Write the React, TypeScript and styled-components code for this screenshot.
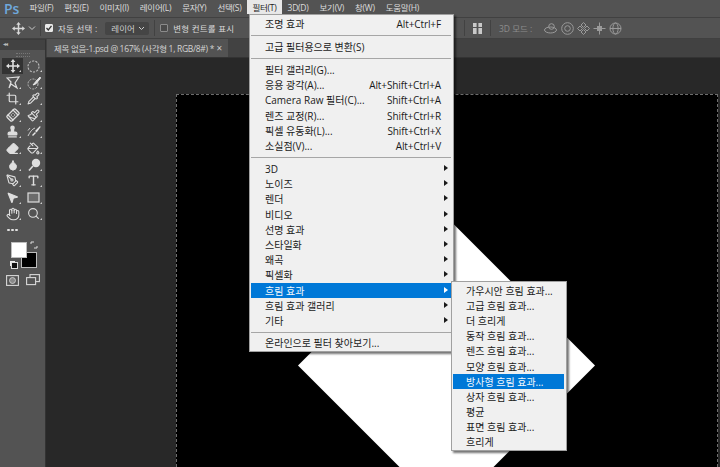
import styled, { createGlobalStyle } from "styled-components";
import {
  Bandage, Crop, Droplet, Eraser, Hand, MousePointer2, PaintBucket, Paintbrush,
  PenTool, Pipette, Search, Stamp, Type,
} from "lucide-react";
import type { ReactNode } from "react";

const Global = createGlobalStyle`
  html, body { margin: 0; padding: 0; background: #282828; }
  body { width: 720px; height: 467px; overflow: hidden; font-family: "Open Sans", "Noto Sans CJK KR", sans-serif; }
  * { box-sizing: border-box; }
`;

const Page = styled.div`
  position: relative;
  width: 720px;
  height: 467px;
  display: flex;
  flex-direction: column;
  overflow: hidden;
`;

const MenuBar = styled.div`
  height: 17px;
  background: #535353;
  display: flex;
  align-items: flex-start;
  padding-left: 4px;
`;

const Logo = styled.span`
  width: 20px;
  font-size: 14px;
  line-height: 17px;
  font-weight: 600;
  color: #6fa8dc;
  font-family: "Open Sans", sans-serif;
`;

const MenuTitles = styled.div`
  display: flex;
`;

const MenuTitle = styled.span<{ $open?: boolean }>`
  height: 14px;
  padding: 0 5.5px;
  font-size: 8.5px;
  line-height: 15px;
  letter-spacing: -0.25px;
  white-space: nowrap;
  color: ${(p) => (p.$open ? "#1c1c1c" : "#dcdcdc")};
  background: ${(p) => (p.$open ? "#e8e8e8" : "transparent")};
`;

const OptionsBar = styled.div`
  height: 22px;
  background: #535353;
  border-top: 1px solid #414141;
  border-bottom: 1px solid #404040;
  display: flex;
  align-items: center;
  padding-left: 12px;
  color: #d8d8d8;
  font-size: 8.5px;
`;

const OptionsLeft = styled.div`
  width: 452px;
  display: flex;
  align-items: center;
`;

const OptDivider = styled.span<{ $gap?: number }>`
  width: 1px;
  height: 16px;
  background: #424242;
  margin: 0 ${(p) => p.$gap ?? 5}px;
  flex: none;
`;

const ChevronGap = styled.span`
  display: flex;
  margin-left: 3px;
`;

const CheckBox = styled.span<{ $on?: boolean }>`
  width: 8px;
  height: 8px;
  flex: none;
  border: 1px solid ${(p) => (p.$on ? "#e8e8e8" : "#8b8b8b")};
  background: ${(p) => (p.$on ? "#e8e8e8" : "#4a4a4a")};
  border-radius: 1px;
  display: flex;
  align-items: center;
  justify-content: center;
`;

const OptLabel = styled.span`
  white-space: nowrap;
  margin-left: 5px;
  letter-spacing: 0.2px;
`;

const Select = styled.span`
  width: 44px;
  height: 13px;
  margin-left: 8px;
  padding: 0 4px 0 6px;
  background: #454545;
  border-radius: 2px;
  display: flex;
  align-items: center;
  justify-content: space-between;
  color: #cfcfcf;
`;

const AlignSlot = styled.span`
  display: flex;
  margin-left: 8px;
`;

const Mode3D = styled.div`
  display: flex;
  align-items: center;
  margin-left: 1px;
  color: #8d8d8d;
  font-size: 8.5px;
  white-space: nowrap;
`;

const ModeIcons = styled.div`
  display: flex;
  gap: 3.2px;
  margin-left: 12px;
`;

const Body = styled.div`
  flex: 1;
  display: flex;
  min-height: 0;
`;

const ToolPanel = styled.div`
  width: 46px;
  flex: none;
  background: #535353;
  border-right: 1px solid #333;
  border-top: 1px solid #3c3c3c;
  display: flex;
  flex-direction: column;
`;

const PanelGrip = styled.div`
  height: 10px;
  background: #424242;
  color: #bbb;
  font-size: 6px;
  line-height: 9px;
  padding-left: 3px;
  letter-spacing: -1px;
`;

const PanelHandle = styled.div`
  height: 8px;
  display: flex;
  justify-content: center;
  padding-top: 3px;
  &::before {
    content: "";
    width: 14px;
    height: 2px;
    border-top: 1px dotted #777;
    border-bottom: 1px dotted #777;
  }
`;

const ToolGrid = styled.div`
  display: grid;
  grid-template-columns: 21px 21px;
  grid-auto-rows: 16.4px;
  padding-left: 2px;
`;

const ToolSlot = styled.div<{ $active?: boolean }>`
  position: relative;
  display: flex;
  align-items: center;
  justify-content: center;
  color: #dedede;
  background: ${(p) => (p.$active ? "#333" : "transparent")};
  &::after {
    content: "";
    position: absolute;
    right: 2px;
    bottom: 2px;
    border-left: 2px solid transparent;
    border-bottom: 2px solid #d0d0d0;
  }
`;

const Tilt = styled.span`
  display: flex;
  transform: rotate(-45deg);
`;

const Dots = styled.div`
  grid-column: 1 / 3;
  display: flex;
  align-items: center;
  gap: 1.5px;
  padding-left: 5px;
  & > i {
    width: 2.5px;
    height: 2.5px;
    border-radius: 50%;
    background: #e0e0e0;
  }
`;

const Swatches = styled.div`
  position: relative;
  height: 30px;
  margin: 4px 0 0 11px;
`;

const Swatch = styled.span<{ $fill: string; $x: number; $y: number; $z: number }>`
  position: absolute;
  left: ${(p) => p.$x}px;
  top: ${(p) => p.$y}px;
  z-index: ${(p) => p.$z};
  width: 16px;
  height: 16px;
  background: ${(p) => p.$fill};
  border: 1px solid #bdbdbd;
`;

const SwapMark = styled.span`
  position: absolute;
  left: 19px;
  top: -1px;
  width: 8px;
  height: 8px;
  color: #ddd;
  display: flex;
`;

const MiniSwatch = styled.span`
  position: absolute;
  left: 0;
  top: 20px;
  width: 7px;
  height: 7px;
  background: #111;
  border: 1px solid #ddd;
  box-shadow: -2px -2px 0 -1px #eee;
`;

const BottomTools = styled.div`
  display: flex;
  gap: 7px;
  align-items: center;
  margin: 2px 0 0 6px;
  color: #d8d8d8;
`;

const Workspace = styled.div`
  flex: 1;
  min-width: 0;
  display: flex;
  flex-direction: column;
`;

const TabBar = styled.div`
  height: 19px;
  background: #424242;
  border-bottom: 1px solid #333;
  padding-left: 1px;
  display: flex;
`;

const Tab = styled.div`
  width: 181px;
  height: 18px;
  background: #535353;
  padding: 0 6px 0 7px;
  display: flex;
  align-items: center;
  justify-content: space-between;
  font-size: 8.5px;
  letter-spacing: -0.3px;
  color: #d4d4d4;
  white-space: nowrap;
`;

const Close = styled.span`
  font-size: 10px;
  color: #cfcfcf;
`;

const Canvas = styled.div`
  flex: 1;
  min-height: 0;
  background: #282828;
  padding: 36px 2px 0 130px;
`;

const Doc = styled.div`
  position: relative;
  height: 100%;
  background: #000;
  overflow: hidden;
  border-top: 1px dashed #6e6e6e;
  border-right: 1px dashed #6e6e6e;
  border-left: 1px dashed #6e6e6e;
`;

const Diamond = styled.div`
  position: absolute;
  left: 121px;
  top: 122px;
  width: 297px;
  height: 297px;
  background: #fff;
  clip-path: polygon(50% 0, 100% 50%, 50% 100%, 0 50%);
`;

const Menu = styled.div<{ $x: number; $y: number; $w: number; $z: number }>`
  position: absolute;
  left: ${(p) => p.$x}px;
  top: ${(p) => p.$y}px;
  width: ${(p) => p.$w}px;
  z-index: ${(p) => p.$z};
  background: #f0f0f0;
  border: 1px solid #a0a0a0;
  padding: 1px 2px 0 1px;
  box-shadow: 2px 2px 2px rgba(0, 0, 0, 0.55);
`;

const Row = styled.div<{ $active?: boolean; $pad: number }>`
  position: relative;
  height: 15.2px;
  padding: 0 10px 0 ${(p) => p.$pad}px;
  display: flex;
  align-items: center;
  justify-content: space-between;
  font-size: 10px;
  line-height: 14px;
  white-space: nowrap;
  color: ${(p) => (p.$active ? "#f4f8fc" : "#1a1a1a")};
  background: ${(p) => (p.$active ? "#0078d7" : "transparent")};
`;

const Shortcut = styled.span`
  font-size: 10px;
  letter-spacing: -0.1px;
`;

const Arrow = styled.span<{ $active?: boolean }>`
  position: absolute;
  right: 3px;
  top: 3.5px;
  border-left: 4px solid ${(p) => (p.$active ? "#fff" : "#1a1a1a")};
  border-top: 3.5px solid transparent;
  border-bottom: 3.5px solid transparent;
`;

const Sep = styled.div<{ $tight?: boolean }>`
  height: ${(p) => (p.$tight ? 7 : 8)}px;
  display: flex;
  align-items: center;
  &::before {
    content: "";
    flex: 1;
    height: 1px;
    background: #a6a6a6;
  }
`;

const Mv = ({ size = 14, color = "currentColor" }: { size?: number; color?: string }) => (
  <svg width={size} height={size} viewBox="0 0 14 14" fill={color}>
    <path d="M7 0 9.4 3H7.8v3.2H11V4.6L14 7l-3 2.4V7.8H7.8V11h1.6L7 14l-2.4-3h1.6V7.8H3v1.6L0 7l3-2.4v1.6h3.2V3H4.6z" />
  </svg>
);

const Marquee = () => (
  <svg width="13" height="13" viewBox="0 0 13 13" fill="none" stroke="#bdbdbd" strokeWidth="1.1" strokeDasharray="2.2 1.2">
    <circle cx="6.5" cy="6.5" r="5.5" />
  </svg>
);

const PolyLasso = () => (
  <svg width="14" height="14" viewBox="0 0 14 14" fill="none" stroke="currentColor" strokeWidth="1.2">
    <path d="M1 2 13 1 9 7 11 12 5 8 3 12 5 6z" />
  </svg>
);

const QuickSelect = () => (
  <svg width="14" height="14" viewBox="0 0 14 14" fill="none">
    <circle cx="6" cy="8" r="5" stroke="#bdbdbd" strokeDasharray="2 1.2" />
    <path d="M13 1 8 6.5 6 9l3-1.2L13.6 2z" fill="#e6e6e6" stroke="#e6e6e6" />
  </svg>
);

const HistoryBrush = () => (
  <svg width="14" height="14" viewBox="0 0 14 14" fill="none">
    <path d="M13 1 8 6l1.6 1.6L13.6 2z" fill="#e6e6e6" />
    <path d="M8 7 5 10l1 1 3-3z" fill="#e6e6e6" />
    <path d="M1 11c2-4 4-7 7-8M1 5.5 3 3" stroke="#cfcfcf" />
  </svg>
);

const Dodge = () => (
  <svg width="14" height="14" viewBox="0 0 14 14">
    <circle cx="9" cy="5" r="4.2" fill="currentColor" />
    <path d="M6 8 2 12.5" stroke="currentColor" strokeWidth="1.6" />
  </svg>
);

const RectTool = () => (
  <svg width="13" height="11" viewBox="0 0 13 11" fill="#6b6b6b" stroke="currentColor" strokeWidth="1.2">
    <rect x="1" y="1" width="11" height="9" />
  </svg>
);

const Mask = () => (
  <svg width="13" height="11" viewBox="0 0 13 11" fill="none" stroke="currentColor" strokeWidth="1.1">
    <rect x="0.6" y="0.6" width="11.8" height="9.8" />
    <circle cx="6.5" cy="5.5" r="3" fill="#8a8a8a" strokeWidth="0.8" />
  </svg>
);

const Screens = () => (
  <svg width="14" height="12" viewBox="0 0 14 12" fill="#535353" stroke="currentColor" strokeWidth="1.1">
    <rect x="4" y="0.6" width="9.4" height="7" />
    <rect x="0.6" y="3.6" width="9" height="7" />
  </svg>
);

const Align = () => (
  <svg width="10" height="11" viewBox="0 0 10 11" fill="#c9c9c9">
    <rect x="0" y="0" width="3.6" height="4" />
    <rect x="5.4" y="0" width="3.6" height="4" />
    <rect x="0" y="5" width="3.6" height="6" />
    <rect x="5.4" y="5" width="3.6" height="6" />
  </svg>
);

const Mode = ({ children }: { children: ReactNode }) => (
  <svg width="13" height="13" viewBox="0 0 13 13" fill="none" stroke="#9a9a9a" strokeWidth="1">
    {children}
  </svg>
);

const tools: ReactNode[] = [
  <Mv />,
  <Marquee />,
  <PolyLasso />,
  <QuickSelect />,
  <Crop size={13} strokeWidth={2.2} />,
  <Pipette size={13} strokeWidth={2} />,
  <Tilt>
    <Bandage size={14} strokeWidth={2.2} />
  </Tilt>,
  <Paintbrush size={13} strokeWidth={2} />,
  <Stamp size={13} strokeWidth={2.4} fill="currentColor" />,
  <HistoryBrush />,
  <Eraser size={13} strokeWidth={2.2} fill="currentColor" />,
  <PaintBucket size={13} strokeWidth={2} />,
  <Droplet size={12} strokeWidth={2} fill="currentColor" />,
  <Dodge />,
  <PenTool size={13} strokeWidth={2} />,
  <Type size={13} strokeWidth={2.6} />,
  <MousePointer2 size={13} strokeWidth={2} fill="currentColor" />,
  <RectTool />,
  <Hand size={14} strokeWidth={1.8} />,
  <Search size={13} strokeWidth={2} />,
];

type Item = { label?: string; key?: string; sub?: boolean; active?: boolean; sep?: boolean; tight?: boolean };

const filterItems: Item[] = [
  { label: "조명 효과", key: "Alt+Ctrl+F" },
  { sep: true },
  { label: "고급 필터용으로 변환(S)" },
  { sep: true },
  { label: "필터 갤러리(G)..." },
  { label: "응용 광각(A)...", key: "Alt+Shift+Ctrl+A" },
  { label: "Camera Raw 필터(C)...", key: "Shift+Ctrl+A" },
  { label: "렌즈 교정(R)...", key: "Shift+Ctrl+R" },
  { label: "픽셀 유동화(L)...", key: "Shift+Ctrl+X" },
  { label: "소실점(V)...", key: "Alt+Ctrl+V" },
  { sep: true },
  { label: "3D", sub: true },
  { label: "노이즈", sub: true },
  { label: "렌더", sub: true },
  { label: "비디오", sub: true },
  { label: "선명 효과", sub: true },
  { label: "스타일화", sub: true },
  { label: "왜곡", sub: true },
  { label: "픽셀화", sub: true },
  { label: "흐림 효과", sub: true, active: true },
  { label: "흐림 효과 갤러리", sub: true },
  { label: "기타", sub: true },
  { sep: true, tight: true },
  { label: "온라인으로 필터 찾아보기..." },
];

const blurItems: Item[] = [
  { label: "가우시안 흐림 효과..." },
  { label: "고급 흐림 효과..." },
  { label: "더 흐리게" },
  { label: "동작 흐림 효과..." },
  { label: "렌즈 흐림 효과..." },
  { label: "모양 흐림 효과..." },
  { label: "방사형 흐림 효과...", active: true },
  { label: "상자 흐림 효과..." },
  { label: "평균" },
  { label: "표면 흐림 효과..." },
  { label: "흐리게" },
];

const titles = ["파일(F)", "편집(E)", "이미지(I)", "레이어(L)", "문자(Y)", "선택(S)", "필터(T)", "3D(D)", "보기(V)", "창(W)", "도움말(H)"];

function MenuRows({ items, pad }: { items: Item[]; pad: number }) {
  return (
    <>
      {items.map((it, i) =>
        it.sep ? (
          <Sep key={i} $tight={it.tight} />
        ) : (
          <Row key={i} $pad={pad} $active={it.active}>
            <span>{it.label}</span>
            {it.key && <Shortcut>{it.key}</Shortcut>}
            {it.sub && <Arrow $active={it.active} />}
          </Row>
        )
      )}
    </>
  );
}

export default function App() {
  return (
    <Page>
      <Global />
      <MenuBar>
        <Logo>Ps</Logo>
        <MenuTitles>
          {titles.map((t) => (
            <MenuTitle key={t} $open={t === "필터(T)"}>
              {t}
            </MenuTitle>
          ))}
        </MenuTitles>
      </MenuBar>

      <OptionsBar>
        <OptionsLeft>
          <Mv size={13} />
          <ChevronGap>
            <svg width="8" height="6" viewBox="0 0 8 6" fill="none" stroke="#ccc">
              <path d="M1 1.5 4 4.5 7 1.5" />
            </svg>
          </ChevronGap>
          <OptDivider $gap={4} />
          <CheckBox $on>
            <svg width="6" height="6" viewBox="0 0 6 6" fill="none" stroke="#333" strokeWidth="1.3">
              <path d="M.5 3 2.3 5 5.5 .8" />
            </svg>
          </CheckBox>
          <OptLabel>자동 선택 :</OptLabel>
          <Select>
            레이어
            <svg width="7" height="5" viewBox="0 0 7 5" fill="none" stroke="#ccc">
              <path d="M1 1 3.5 3.5 6 1" />
            </svg>
          </Select>
          <OptDivider />
          <CheckBox />
          <OptLabel>변형 컨트롤 표시</OptLabel>
        </OptionsLeft>
        <OptDivider $gap={0} />
        <AlignSlot>
          <Align />
        </AlignSlot>
        <OptDivider $gap={7} />
        <Mode3D>
          3D 모드 :
          <ModeIcons>
            <Mode>
              <ellipse cx="6.5" cy="8" rx="6" ry="3" />
              <circle cx="7.5" cy="4.5" r="2.8" />
            </Mode>
            <Mode>
              <circle cx="6.5" cy="6.5" r="5.8" />
              <circle cx="6.5" cy="6.5" r="2.8" />
            </Mode>
            <Mode>
              <path d="M6.5 .5 9 3 6.5 5.5 4 3zM6.5 7.5 9 10 6.5 12.5 4 10zM.5 6.5 3 4 5.5 6.5 3 9zM7.5 6.5 10 4 12.5 6.5 10 9z" />
            </Mode>
            <Mode>
              <path d="M6.5 .5V4M6.5 9v3.5M.5 6.5H4M9 6.5h3.5" />
              <rect x="4.5" y="4.5" width="4" height="4" fill="#9a9a9a" />
            </Mode>
            <Mode>
              <circle cx="6.5" cy="6.5" r="5.5" />
              <ellipse cx="6.5" cy="6.5" rx="2.6" ry="5.5" />
              <path d="M1 6.5h11" />
            </Mode>
          </ModeIcons>
        </Mode3D>
      </OptionsBar>

      <Body>
        <ToolPanel>
          <PanelGrip>◂◂</PanelGrip>
          <PanelHandle />
          <ToolGrid>
            {tools.map((tool, i) => (
              <ToolSlot key={i} $active={i === 0}>
                {tool}
              </ToolSlot>
            ))}
            <Dots>
              <i />
              <i />
              <i />
            </Dots>
          </ToolGrid>
          <Swatches>
            <Swatch $fill="#fff" $x={0} $y={0} $z={2} />
            <Swatch $fill="#000" $x={10} $y={10} $z={1} />
            <SwapMark>
              <svg width="8" height="8" viewBox="0 0 8 8" fill="none" stroke="currentColor">
                <path d="M1 3V1h3M7 5v2H4" />
              </svg>
            </SwapMark>
            <MiniSwatch />
          </Swatches>
          <BottomTools>
            <Mask />
            <Screens />
          </BottomTools>
        </ToolPanel>

        <Workspace>
          <TabBar>
            <Tab>
              제목 없음-1.psd @ 167% (사각형 1, RGB/8#) *<Close>×</Close>
            </Tab>
          </TabBar>
          <Canvas>
            <Doc>
              <Diamond />
            </Doc>
          </Canvas>
        </Workspace>
      </Body>

      <Menu $x={249} $y={14} $w={205} $z={5}>
        <MenuRows items={filterItems} pad={14} />
      </Menu>
      <Menu $x={451} $y={281} $w={116} $z={6}>
        <MenuRows items={blurItems} pad={13} />
      </Menu>
    </Page>
  );
}
